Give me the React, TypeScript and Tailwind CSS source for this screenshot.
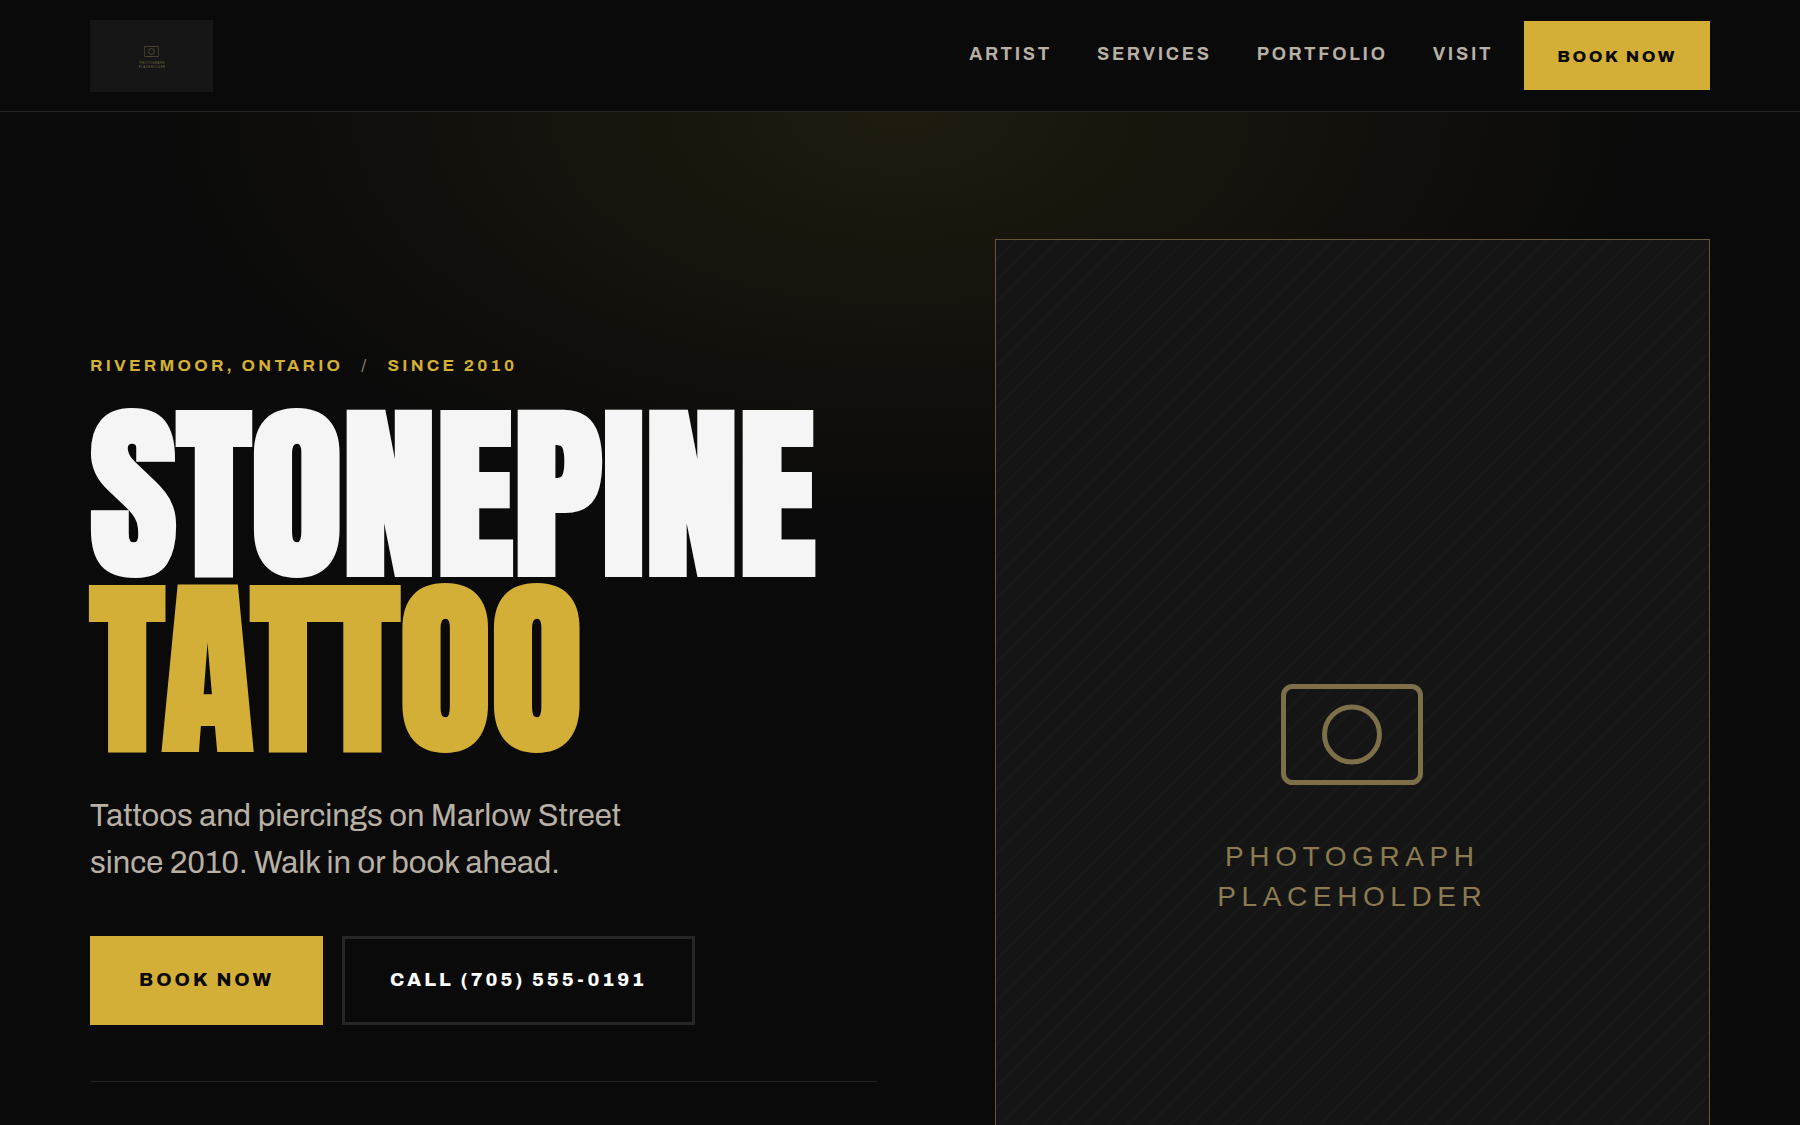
const navLinks = [
  { label: 'Artist', href: '#artist' },
  { label: 'Services', href: '#services' },
  { label: 'Portfolio', href: '#portfolio' },
  { label: 'Visit', href: '#visit' },
];

function CameraIcon({ className }: { className?: string }) {
  return (
    <svg viewBox="0 0 142 101" fill="none" stroke="currentColor" strokeWidth="5" className={className} aria-hidden="true">
      <rect x="2.5" y="2.5" width="137" height="96" rx="9" />
      <circle cx="71" cy="50.5" r="27.5" />
    </svg>
  );
}

function Logo() {
  return (
    <a
      href="#top"
      aria-label="Stonepine Tattoo"
      className="flex h-[72px] w-[123px] flex-col items-center justify-center bg-[#161616] pt-1 text-[#7d6f49]"
    >
      <CameraIcon className="h-[11px] w-[15px]" />
      <svg viewBox="0 0 280 80" className="mt-1 h-2 w-7" fill="currentColor" aria-hidden="true">
        <text x="142" y="30" textAnchor="middle" fontSize="28" letterSpacing="5.6" fontFamily="Liberation Sans, sans-serif">
          PHOTOGRAPH
        </text>
        <text x="142" y="70" textAnchor="middle" fontSize="28" letterSpacing="5.6" fontFamily="Liberation Sans, sans-serif">
          PLACEHOLDER
        </text>
      </svg>
    </a>
  );
}

function Header() {
  return (
    <header className="flex h-28 items-center justify-between border-b border-[#222222] bg-[#0a0a0a] px-[5%]">
      <Logo />
      <nav className="flex items-center gap-[31px]">
        <ul className="flex items-center gap-[45px] pb-0.5">
          {navLinks.map((link) => (
            <li key={link.label}>
              <a href={link.href} className="text-[18px] font-bold tracking-[0.15em] text-[#b8b0a4] uppercase">
                {link.label}
              </a>
            </li>
          ))}
        </ul>
        <a
          href="#book"
          className="flex h-[69px] items-center bg-[#d4af37] px-[33px] pt-0.5 text-[17px] font-extrabold tracking-[0.15em] text-[#0a0a0a] uppercase"
        >
          Book Now
        </a>
      </nav>
    </header>
  );
}

function HeroCopy() {
  return (
    <div className="pt-[114px]">
      <p className="flex gap-[18px] text-[17px] leading-[26px] font-bold tracking-[0.19em] text-[#d4af37] uppercase">
        <span>Rivermoor, Ontario</span>
        <span className="font-normal text-[#8a8378]">/</span>
        <span>Since 2010</span>
      </p>
      <h1 className="mt-7 font-['Anton'] text-[188px] leading-[175px] font-bold text-[#f5f5f5] uppercase">
        <span className="block">Stonepine</span>
        <span className="block text-[#d4af37]">Tattoo</span>
      </h1>
      <p className="mt-9 max-w-[580px] text-[31px] leading-[47px] text-[#b8b0a4]">
        Tattoos and piercings on Marlow Street since 2010. Walk in or book ahead.
      </p>
      <div className="mt-[49px] flex gap-[19px]">
        <a
          href="#book"
          className="flex h-[89px] items-center bg-[#d4af37] px-[49px] text-[19px] font-extrabold tracking-[3px] text-[#0a0a0a] uppercase"
        >
          Book Now
        </a>
        <a
          href="tel:+17055550191"
          className="flex h-[89px] items-center border-3 border-[#262626] px-[45px] text-[19px] font-extrabold tracking-[3px] text-white uppercase"
        >
          Call (705) 555-0191
        </a>
      </div>
      <hr className="mt-14 border-[#222222]" />
    </div>
  );
}

function HeroPhoto() {
  return (
    <div
      role="img"
      aria-label="Photograph placeholder"
      className="flex h-[1122px] flex-col items-center justify-center border border-[#665833] bg-[#151515] bg-[repeating-linear-gradient(135deg,transparent_0px,transparent_13px,#191919_13px,#191919_15px)] text-[#7d6f49]"
    >
      <CameraIcon className="h-[101px] w-[142px]" />
      <p className="mt-[52px] text-center font-['Liberation_Sans'] text-[28px] leading-10 tracking-[0.2em] text-[#8b7b50] uppercase">
        Photograph
        <br />
        Placeholder
      </p>
    </div>
  );
}

export default function App() {
  return (
    <div id="top" className="min-h-screen bg-[#0a0a0a] font-['Archivo'] text-[#f5f5f5]">
      <Header />
      <main className="bg-[radial-gradient(ellipse_42%_30%_at_50%_0%,rgba(212,175,55,0.1),transparent)] px-[5%] py-[127px]">
        <section className="grid grid-cols-[1.1fr_1fr] gap-[118px]">
          <HeroCopy />
          <HeroPhoto />
        </section>
      </main>
    </div>
  );
}
